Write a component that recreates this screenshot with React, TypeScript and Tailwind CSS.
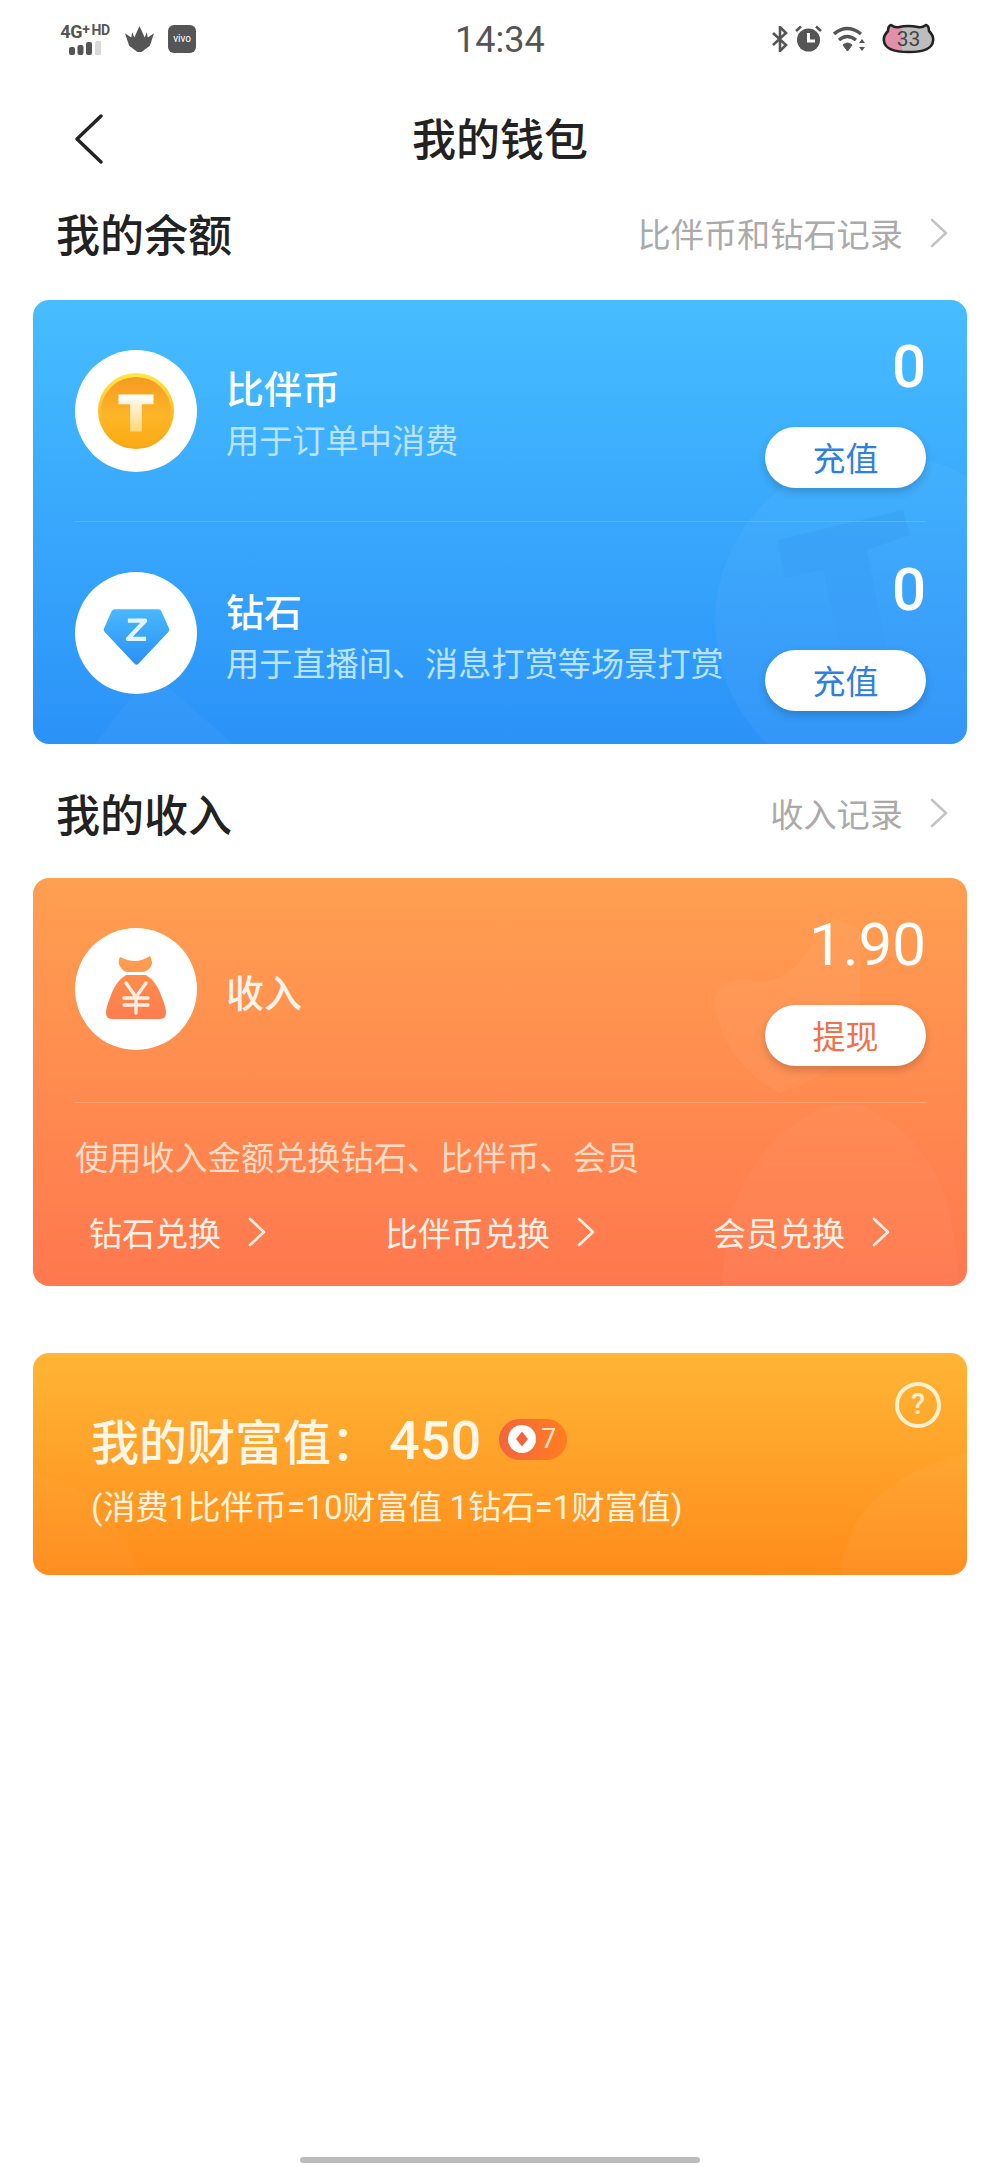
import React from "react";

const cjk = "font-['Noto_Sans_CJK_SC','Noto_Sans',sans-serif]";
const num = "font-['Roboto','Noto_Sans_CJK_SC',sans-serif]";

function Chevron({ className }: { className: string }) {
  return (
    <svg viewBox="0 0 20 30" className={className} fill="none" stroke="currentColor" strokeWidth="2.6" strokeLinecap="round" strokeLinejoin="round">
      <path d="M3 2 L17 15 L3 28" />
    </svg>
  );
}

function SectionHeader({ title, link }: { title: string; link: string }) {
  return (
    <div className="flex h-[60px] items-center justify-between pl-[56px] pr-[51px]">
      <span className="text-[44px] leading-[60px] font-medium text-[#222222]">{title}</span>
      <span className="flex items-center text-[33.2px] leading-[60px] text-[#aaaaaa]">
        {link}
        <Chevron className="ml-[26px] h-[32px] w-[20px] text-[#c4c4c4]" />
      </span>
    </div>
  );
}

function ActionButton({ label, color }: { label: string; color: string }) {
  return (
    <button className={`flex h-[61px] w-[161px] items-center justify-center rounded-full bg-white text-[33px] shadow-[0_4px_8px_rgba(0,0,0,0.18)] ${color}`}>
      {label}
    </button>
  );
}

function Coin() {
  return (
    <svg viewBox="0 0 80 80" className="h-[78px] w-[78px]">
      <defs>
        <linearGradient id="coinEdge" x1="0" y1="0" x2="0" y2="1">
          <stop offset="0" stopColor="#ffe94a" />
          <stop offset="0.45" stopColor="#ffc02a" />
          <stop offset="1" stopColor="#f7a514" />
        </linearGradient>
        <linearGradient id="coinFace" x1="0" y1="0" x2="0" y2="1">
          <stop offset="0" stopColor="#f59a22" />
          <stop offset="0.55" stopColor="#fdb527" />
          <stop offset="1" stopColor="#fbaa14" />
        </linearGradient>
        <linearGradient id="coinT" x1="0" y1="0" x2="0" y2="1">
          <stop offset="0" stopColor="#ffffff" />
          <stop offset="1" stopColor="#ffd77a" />
        </linearGradient>
      </defs>
      <circle cx="40" cy="40" r="39" fill="url(#coinEdge)" />
      <circle cx="40" cy="41" r="36" fill="url(#coinFace)" />
      <path d="M22 23 H58 V33 H46 V61 H34 V33 H22 Z" fill="url(#coinT)" />
    </svg>
  );
}

function Diamond() {
  return (
    <svg viewBox="0 0 72 60" className="mt-[8px] h-[58px] w-[69px]">
      <defs>
        <linearGradient id="dia" x1="0" y1="0" x2="0" y2="1">
          <stop offset="0" stopColor="#48b9fd" />
          <stop offset="1" stopColor="#2b8ff5" />
        </linearGradient>
      </defs>
      <path d="M13 1 H59 Q61 1 62 3 L70 21 Q71 23 69 25 L38 58 Q36 60 34 58 L3 25 Q1 23 2 21 L10 3 Q11 1 13 1 Z" fill="url(#dia)" />
      <path d="M27 13 H45 L27 32 H46" fill="none" stroke="#e3f3ff" strokeWidth="4.4" strokeLinejoin="round" />
    </svg>
  );
}

function MoneyBag() {
  return (
    <svg viewBox="0 0 60 64" className="mb-[4px] h-[64px] w-[60px]">
      <defs>
        <linearGradient id="bag" x1="0" y1="0" x2="0" y2="1">
          <stop offset="0" stopColor="#ff8d4a" />
          <stop offset="1" stopColor="#fd7c50" />
        </linearGradient>
      </defs>
      <path d="M14 2 Q22 6 29 6 Q36 6 44 1 Q48 8 44 13 Q40 17 36 17 H22 Q18 17 15 13 Q11 8 14 2 Z" fill="#ff9b50" />
      <path d="M20 20 H40 Q50 26 55 40 Q60 52 60 58 Q60 64 54 64 H6 Q0 64 0 58 Q0 52 5 40 Q10 26 20 20 Z" fill="url(#bag)" />
      <path d="M20 28 L30 42 L40 28 M18 43 H42 M18 50 H42 M30 42 V58" fill="none" stroke="#ffeee4" strokeWidth="3.4" strokeLinecap="round" strokeLinejoin="round" />
    </svg>
  );
}

function Battery() {
  return (
    <div className="relative ml-[16px] h-[31px] w-[53px]">
      <svg viewBox="0 0 53 31" className="h-[31px] w-[53px]">
        <defs>
          <linearGradient id="bat" x1="0" y1="0" x2="1" y2="0">
            <stop offset="0.36" stopColor="#e28fac" />
            <stop offset="0.36" stopColor="#bdbdbd" />
          </linearGradient>
        </defs>
        <path d="M9 2 Q13 5 17 4 Q26 2 36 4 Q40 5 44 2 Q47 3 47 8 Q52 13 51 18 Q50 29 27 29 Q3 29 2 18 Q1 13 6 8 Q6 3 9 2 Z" fill="url(#bat)" stroke="#222222" strokeWidth="2.6" strokeLinejoin="round" />
      </svg>
      <span className={`${num} absolute inset-0 flex items-center justify-center pt-[1px] text-[21px] leading-none text-[#444444]`}>33</span>
    </div>
  );
}

function StatusBar() {
  return (
    <div className="relative flex h-[76px] items-center justify-between pl-[58px] pr-[65px] pt-[1px] text-[#555555]">
      <div className="flex items-center">
        <div className="flex w-[54px] flex-col items-center">
          <span className={`${num} flex items-start text-[18px] leading-[17px] font-bold tracking-[-0.3px] whitespace-nowrap text-[#555555]`}>
            4G<span className="text-[14px] leading-[13px]">+</span><span className="ml-[2px] text-[14px] leading-[14px]">HD</span>
          </span>
          <svg viewBox="0 0 34 14" className="mt-[1px] h-[14px] w-[34px]">
            <rect x="1" y="6" width="6" height="8" rx="2" fill="#555555" />
            <rect x="9.5" y="4" width="6" height="10" rx="2" fill="#555555" />
            <rect x="18" y="1" width="6" height="13" rx="2" fill="#555555" />
            <rect x="27" y="0" width="6" height="14" rx="1.5" fill="#d9d9d9" />
          </svg>
        </div>
        <svg viewBox="0 0 28 25" className="ml-[13px] h-[26px] w-[29px]">
          <path d="M14 0 L19 11 L21 6 L22 11 L28 7 L24 19 L16 25 H12 L4 19 L0 7 L6 11 L7 6 L9 11 Z" fill="#555555" />
        </svg>
        <div className="ml-[14px] flex h-[28px] w-[28px] items-center justify-center rounded-[6px] bg-[#555555] text-[10px] leading-none text-white font-['Roboto',sans-serif]">
          vivo
        </div>
      </div>
      <span className={`${num} absolute left-[455px] top-[20px] text-[36px] leading-[40px] text-[#555555]`}>14:34</span>
      <div className="flex items-center">
        <svg viewBox="0 0 16 26" className="h-[26px] w-[16px]" fill="none" stroke="#555555" strokeWidth="2.6">
          <path d="M1 7 L14 19 L8 25 V1 L14 7 L1 19" />
        </svg>
        <svg viewBox="0 0 27 27" className="ml-[7px] h-[27px] w-[27px]">
          <circle cx="13.5" cy="15" r="11.5" fill="#555555" />
          <path d="M13.5 8 V16 H20" fill="none" stroke="#ffffff" strokeWidth="3" />
          <path d="M1 6 L6 1.5 M26 6 L21 1.5" stroke="#555555" strokeWidth="2.6" />
        </svg>
        <svg viewBox="0 0 33 26" className="ml-[11px] h-[26px] w-[33px]" fill="none" stroke="#555555">
          <path d="M1 8 Q14 -3 28 8" strokeWidth="3.4" />
          <path d="M6 14 Q14 7 23 14" strokeWidth="3.4" />
          <path d="M10 19 Q14.5 15 19 19 L14.5 25 Z" fill="#555555" strokeWidth="1" />
          <path d="M29 13 L26 17 H32 Z M29 25 L26 21 H32 Z" fill="#555555" stroke="none" />
        </svg>
        <Battery />
      </div>
    </div>
  );
}

function BalanceRow({ icon, name, desc, top, circleTop }: { icon: React.ReactNode; name: string; desc: string; top: string; circleTop: string }) {
  return (
    <div className={`flex justify-between ${top}`}>
      <div className="flex">
        <div className={`flex h-[122px] w-[122px] items-center justify-center rounded-full bg-white ${circleTop}`}>{icon}</div>
        <div className="ml-[29px] flex flex-col">
          <span className="mt-[29px] text-[38px] leading-[52px] font-medium text-white">{name}</span>
          <span className="text-[33.2px] leading-[52px] whitespace-nowrap text-[#b9e3ff]">{desc}</span>
        </div>
      </div>
      <div className="flex flex-col items-end">
        <span className={`${num} text-[60px] leading-[70px] font-medium text-white`}>0</span>
        <div className="mt-[25px]">
          <ActionButton label="充值" color="text-[#2f7fe0]" />
        </div>
      </div>
    </div>
  );
}

function LinkItem({ label }: { label: string }) {
  return (
    <span className="flex items-center text-[33px] leading-[46px] whitespace-nowrap text-[#fff0e6]">
      {label}
      <Chevron className="ml-[26px] h-[32px] w-[20px] text-[#fff0e6]" />
    </span>
  );
}

export default function App() {
  return (
    <div className={`${cjk} relative h-[2167px] w-[1000px] overflow-hidden bg-white`}>
      <StatusBar />

      <div className="relative flex h-[127px] items-start justify-center pt-[36px]">
        <svg viewBox="0 0 30 50" className="absolute left-[74px] top-[38px] h-[50px] w-[30px]" fill="none" stroke="#222222" strokeWidth="3.4" strokeLinecap="round" strokeLinejoin="round">
          <path d="M27 2 L3 25 L27 48" />
        </svg>
        <span className="text-[44px] leading-[50px] font-medium text-[#222222]">我的钱包</span>
      </div>

      <SectionHeader title="我的余额" link="比伴币和钻石记录" />

      <div className="relative mx-[33px] mt-[37px] h-[444px] overflow-hidden rounded-[16px] bg-gradient-to-b from-[#47bdff] to-[#2b92f8] pl-[42px] pr-[41px]">
        <svg viewBox="0 0 934 444" className="absolute inset-0 h-[444px] w-[934px]">
          <defs>
            <linearGradient id="blueT" x1="0" y1="0" x2="0" y2="1">
              <stop offset="0" stopColor="#1e78d8" stopOpacity="0.14" />
              <stop offset="1" stopColor="#1e78d8" stopOpacity="0" />
            </linearGradient>
          </defs>
          <circle cx="850" cy="322" r="168" fill="#ffffff" fillOpacity="0.04" />
          <path d="M744 240 L870 210 L877 235 L834 250 L860 380 L812 372 L790 270 L752 278 Z" fill="url(#blueT)" />
          <path d="M62 444 L96 400 L125 378 L200 444 Z" fill="#ffffff" fillOpacity="0.03" />
        </svg>
        <div className="relative">
          <BalanceRow top="pt-[32px]" circleTop="mt-[18px]" icon={<Coin />} name="比伴币" desc="用于订单中消费" />
          <div className="mt-[33px] h-[1px] bg-white/15" />
          <BalanceRow top="pt-[33px]" circleTop="mt-[17px]" icon={<Diamond />} name="钻石" desc="用于直播间、消息打赏等场景打赏" />
        </div>
      </div>

      <div className="mt-[39px]">
        <SectionHeader title="我的收入" link="收入记录" />
      </div>

      <div className="relative mx-[33px] mt-[35px] h-[408px] overflow-hidden rounded-[16px] bg-gradient-to-b from-[#ff9f50] to-[#ff774f] pl-[42px] pr-[41px]">
        <svg viewBox="0 0 934 408" className="absolute inset-0 h-[408px] w-[934px]">
          <path d="M682 125 Q682 102 712 102 Q745 110 770 80 L800 40 L827 50 V130 Q825 175 790 195 Q765 210 747 215 Q690 185 682 125 Z" fill="#ffffff" fillOpacity="0.045" />
          <path d="M690 408 Q690 290 770 240 Q800 222 830 228 Q880 250 905 300 Q925 350 925 408 Z" fill="#ffffff" fillOpacity="0.03" />
        </svg>
        <div className="relative">
          <div className="flex justify-between pt-[32px]">
            <div className="flex">
              <div className="mt-[18px] flex h-[122px] w-[122px] items-center justify-center rounded-full bg-white">
                <MoneyBag />
              </div>
              <span className="ml-[29px] mt-[55px] text-[38px] leading-[52px] font-medium text-[#fff3ea]">收入</span>
            </div>
            <div className="flex flex-col items-end">
              <span className={`${num} text-[60px] leading-[70px] text-white`}>1.90</span>
              <div className="mt-[25px]">
                <ActionButton label="提现" color="text-[#f0714a]" />
              </div>
            </div>
          </div>
          <div className="mt-[36px] h-[1px] bg-white/20" />
          <div className="mt-[28px] text-[33.2px] leading-[50px] whitespace-nowrap text-[#ffdcc6]">使用收入金额兑换钻石、比伴币、会员</div>
          <div className="mt-[28px] flex pl-[14px]">
            <LinkItem label="钻石兑换" />
            <div className="ml-[118px]"><LinkItem label="比伴币兑换" /></div>
            <div className="ml-[117px]"><LinkItem label="会员兑换" /></div>
          </div>
        </div>
      </div>

      <div className="relative mx-[33px] mt-[67px] h-[222px] overflow-hidden rounded-[16px] bg-gradient-to-b from-[#ffb535] to-[#ff8c1b] pl-[58px]">
        <svg viewBox="0 0 934 222" className="absolute inset-0 h-[222px] w-[934px]">
          <path d="M807 222 Q815 130 934 100 V222 Z" fill="#ffffff" fillOpacity="0.04" />
          <path d="M0 120 Q70 130 108 222 H0 Z" fill="#ffffff" fillOpacity="0.025" />
        </svg>
        <div className="relative flex items-center pt-[49px]">
          <span className="text-[48px] leading-[70px] font-medium text-[#fff6e6]">我的财富值：</span>
          <span className={`${num} ml-[10px] mt-[4px] text-[54px] leading-[70px] font-medium text-[#fff6e6]`}>450</span>
          <span className="ml-[18px] flex h-[41px] w-[68px] items-center rounded-full bg-gradient-to-r from-[#f4643a] to-[#ff7e20] pl-[9px]">
            <svg viewBox="0 0 28 28" className="h-[28px] w-[28px]">
              <circle cx="14" cy="14" r="14" fill="#ffffff" />
              <path d="M14 6.5 L20 14 L14 21.5 L8 14 Z" fill="#f4643a" />
            </svg>
            <span className={`${num} ml-[5px] text-[27px] leading-none text-[#ffe3c0]`}>7</span>
          </span>
        </div>
        <div className="relative mt-[7px] text-[33px] leading-[44px] tracking-[0.15px] whitespace-nowrap text-[#fff3df]">
          <span className={num}>(</span>消费<span className={num}>1</span>比伴币<span className={num}>=10</span>财富值 <span className={num}>1</span>钻石<span className={num}>=1</span>财富值<span className={num}>)</span>
        </div>
        <div className={`${num} absolute right-[26px] top-[29px] flex h-[46px] w-[46px] items-center justify-center rounded-full border-[4px] border-[#fff1cf] text-[29px] font-medium text-[#fff1cf]`}>?</div>
      </div>

      <div className="absolute bottom-[4px] left-[300px] h-[6px] w-[400px] rounded-full bg-[#bbbbbb]" />
    </div>
  );
}
